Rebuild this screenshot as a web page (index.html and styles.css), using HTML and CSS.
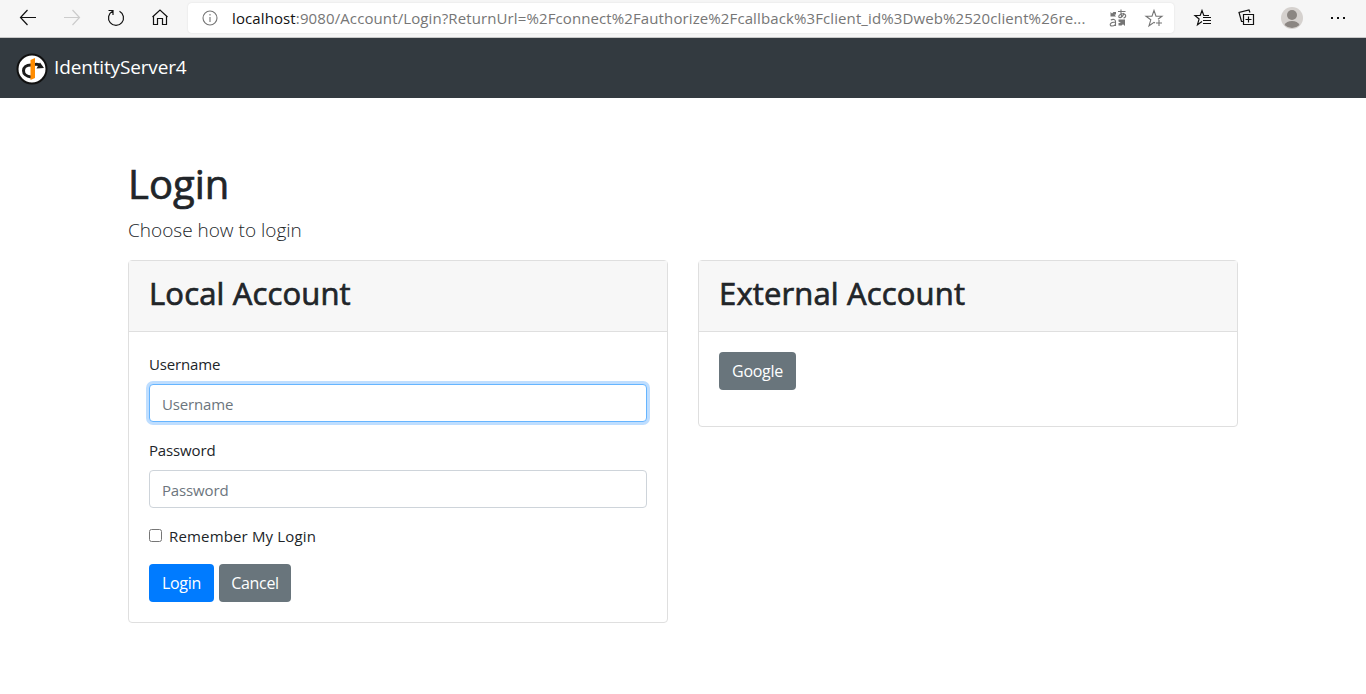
FILE: index.html
```html
<!DOCTYPE html>
<html lang="en">
<head>
<meta charset="utf-8">
<title>IdentityServer4</title>
<link rel="stylesheet" href="styles.css">
</head>
<body>
<header class="browser">
  <div class="nav-icons">
    <svg class="icon" viewBox="0 0 20 20"><path d="M18 9.500H2.500M9.500 2L2.500 9.500l7 7.500"/></svg>
    <svg class="icon icon-disabled" viewBox="0 0 20 20"><path d="M2 9.500H17.500M10.500 2l7 7.500-7 7.500"/></svg>
    <svg class="icon" viewBox="0 0 20 20"><path d="M13.500 3.200A7.500 7.500 0 1 1 6.500 3.200M2.500 2.500H7V7"/></svg>
    <svg class="icon" viewBox="0 0 20 20"><path d="M3.500 8v8.500h4v-6h5v6h4V8M2.500 9L10 2l7.500 7"/></svg>
  </div>
  <div class="address">
    <svg class="icon icon-info" viewBox="0 0 20 20"><circle cx="10" cy="10" r="7"/><path d="M10 9v5M10 6v1.500"/></svg>
    <div class="url"><span class="host">localhost</span>:9080/Account/Login?ReturnUrl=%2Fconnect%2Fauthorize%2Fcallback%3Fclient_id%3Dweb%2520client%26re...</div>
    <svg class="icon icon-grey translate" viewBox="0 0 20 20"><path class="solid" d="M2.500 4L4 5.500 5.500 4H8v2.500H6.500L8 8.500H2.500zM10.500 11.500H17V18l-2-1.800-1.500 1.300h-3V15H13l-2.500-1.500z"/><path d="M10 3.500h7.500M13 1.500c-.3 3 0 5.500.8 8M16 5c-1 3.500-3 5-4.700 4.500-1.600-1 .7-4 3.700-3.800 3.500.3 3.500 3.800.5 4.300M2.800 12c2.500-1.300 4.700-.5 4.700 1.500v4.500M7.500 14c-6 0-6.500 4-3.500 4 2 0 3.500-1 3.500-2.500"/></svg>
    <svg class="icon icon-grey" viewBox="0 0 20 20"><path d="M11 15l-1-.7-5 3.500 1.800-6L2 8.200h6L10 2.500l2 5.700h6l-4 3.100M15 12v6M12 15h6"/></svg>
  </div>
  <div class="tools">
    <svg class="icon" viewBox="0 0 20 20"><path d="M9 13.500l-4.500 3.200 1.600-5.700L2 7.500h5.200L9 2.500l1.800 5H16M10 9.500h8M10 12.500h8M10 15.500h8"/></svg>
    <svg class="icon" viewBox="0 0 20 20"><path d="M6.500 6.500h10v10h-10zM11.500 8.500v6M8.500 11.500h6M13 4.500L12 2 2 4.500 4.500 13.500h2"/></svg>
    <svg class="avatar" viewBox="0 0 22 22"><circle class="avatar-bg" cx="11" cy="11" r="11"/><circle class="avatar-fg" cx="11" cy="8" r="5"/><path class="avatar-fg" d="M3.500 18a8 6 0 0 1 15 0 11 11 0 0 1-15 0"/></svg>
    <svg class="icon" viewBox="0 0 20 20"><path class="solid" d="M5 9h2v2H5zM11 9h2v2h-2zM17 9h2v2h-2z"/></svg>
  </div>
</header>
<nav class="navbar">
  <svg class="logo" viewBox="0 0 32 32"><circle class="logo-disc" cx="16" cy="16" r="14.500"/><path class="logo-ring" d="M15 12C5 12 5 23 15 24"/><path class="logo-ring" d="M19 11.500c3-.5 4 0 5 1"/><path class="logo-head" d="M24 9.500l4 5.500-7.500.5z"/><path class="logo-bar" d="M14.500 7l4.500-2v20l-4.500 2z"/></svg>
  <span class="brand">IdentityServer4</span>
</nav>
<main class="container">
  <h1>Login</h1>
  <p class="lead">Choose how to login</p>
  <div class="row">
    <section class="card">
      <div class="card-header"><h2>Local Account</h2></div>
      <form class="card-body">
        <label class="label">Username</label>
        <input class="field field-focus" type="text" placeholder="Username">
        <label class="label">Password</label>
        <input class="field" type="password" placeholder="Password">
        <label class="check"><input type="checkbox" class="box"><span>Remember My Login</span></label>
        <div class="actions"><button type="button" class="btn btn-primary">Login</button><button type="button" class="btn btn-cancel">Cancel</button></div>
      </form>
    </section>
    <section class="card">
      <div class="card-header"><h2>External Account</h2></div>
      <div class="card-body external"><button type="button" class="btn btn-google">Google</button></div>
    </section>
  </div>
</main>
</body>
</html>
```
FILE: styles.css
```css
* { box-sizing: border-box; }
body { margin: 0; background: #fff; color: #212529; font: 16px/24px "Open Sans", "Noto Sans", sans-serif; letter-spacing: -0.15px; overflow: hidden; }
h1, h2, p { margin: 0; }
.browser { height: 38px; display: flex; align-items: flex-start; background: #f6f6f6; border-bottom: 1px solid #c8c8c8; }
.icon { width: 20px; height: 20px; flex: none; fill: none; stroke: #111; stroke-width: 1.2; }
.icon-disabled { stroke: #ccc; }
.icon-info, .icon-grey { stroke: #757575; stroke-width: 1.1; }
.icon .solid { fill: #111; stroke: none; }
.icon-grey .solid { fill: #757575; }
.nav-icons { width: 188px; display: flex; gap: 24px; padding: 8px 0 0 18px; }
.address { width: 986px; height: 30px; margin-top: 3px; display: flex; align-items: center; padding: 0 10px 0 12px; background: #fff; border-radius: 4px; box-shadow: 0 0 2px #ddd; }
.url { flex: none; width: 876px; margin-left: 12px; color: #767676; font-size: 15px; letter-spacing: 0.11px; white-space: nowrap; }
.host { color: #111; }
.translate { margin-right: 16px; }
.tools { display: flex; gap: 24px; padding: 8px 0 0 19px; }
.avatar { width: 22px; height: 22px; margin: -1px -1px 0 0; }
.avatar-bg { fill: #d5d1ce; }
.avatar-fg { fill: #8b8682; }
.navbar { height: 60px; display: flex; align-items: center; gap: 6px; padding: 2px 16px 0; background: #333a40; }
.logo { width: 32px; height: 32px; }
.logo-disc { fill: #fff; stroke: #111; stroke-width: 2; }
.logo-ring { fill: none; stroke: #1b1b1b; stroke-width: 3; }
.logo-head { fill: #1b1b1b; }
.logo-bar { fill: #ff8c00; }
.brand { color: #fff; font-size: 19px; line-height: 30px; padding-bottom: 4px; }
.container { width: 1110px; margin: 62px auto 0; }
h1, h2 { font-weight: 400; -webkit-text-stroke: 0.7px currentColor; }
h1 { font-size: 40px; line-height: 48px; letter-spacing: 0; }
.lead { margin: 7px 0 15px; font-size: 19px; line-height: 30px; font-weight: 300; letter-spacing: 0; }
.row { display: flex; align-items: flex-start; gap: 30px; }
.card { width: 540px; border: 1px solid #dfdfdf; border-radius: 4px; }
.card-header { height: 71px; padding: 13px 20px; background: #f7f7f7; border-bottom: 1px solid #dfdfdf; }
h2 { font-size: 31px; line-height: 38px; letter-spacing: 0.15px; }
.card-body { padding: 20px; display: flex; flex-direction: column; }
.external { height: 94px; align-items: flex-start; }
.label { margin-bottom: 8px; font-size: 15px; }
.field { height: 38px; margin: 0 0 16px; padding: 8px 12px 6px; border: 1px solid #ced4da; border-radius: 4px; font: 15px/24px "Open Sans", sans-serif; letter-spacing: inherit; }
.field::placeholder { color: #6c757d; opacity: 1; }
.field-focus { border-color: #66b5ff; box-shadow: 0 0 0 3px #bfdeff; }
.check { display: flex; align-items: flex-start; gap: 7px; font-size: 15px; letter-spacing: 0.16px; margin-bottom: 16px; }
.box { width: 13px; height: 13px; margin: 5px 0 0; }
.actions { display: flex; gap: 5px; }
.btn { height: 38px; padding: 0; border: 0; border-radius: 4px; color: #fff; background: #69757c; font: 16px/24px "Open Sans", sans-serif; letter-spacing: -0.3px; }
.btn-primary { width: 65px; background: #007bff; }
.btn-cancel { width: 72px; }
.btn-google { width: 77px; }
```
